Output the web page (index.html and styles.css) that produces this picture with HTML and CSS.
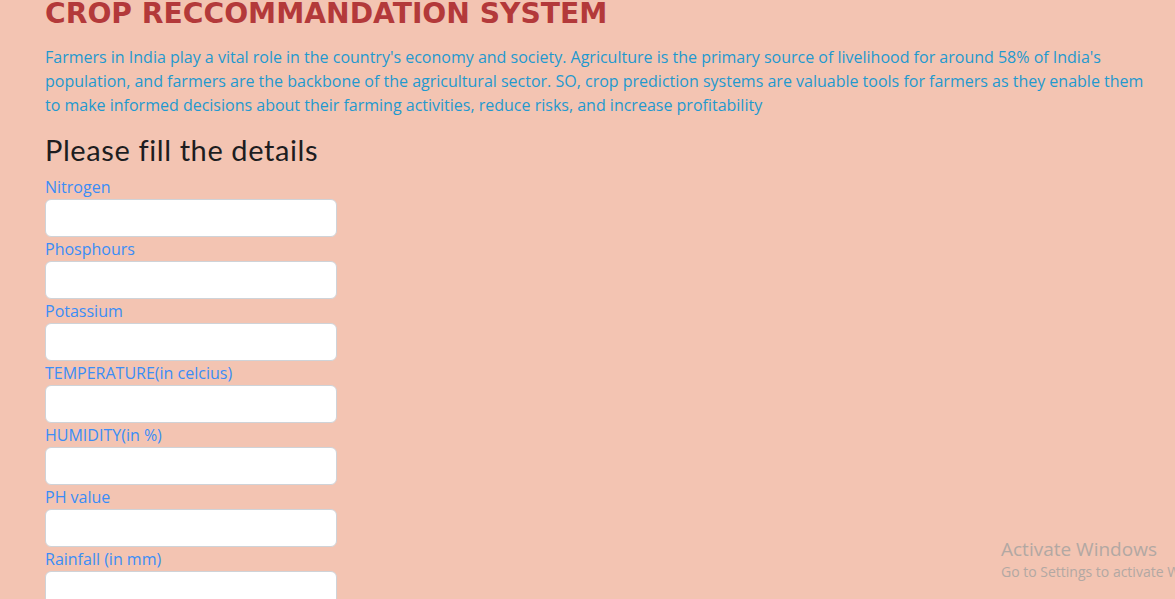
FILE: index.html
```html
<!DOCTYPE html>
<html>
<head>
<meta charset="utf-8">
<link rel="stylesheet" href="styles.css">
</head>
<body>
<div class="page">
  <h1 class="title">CROP RECCOMMANDATION SYSTEM</h1>
  <p class="intro">Farmers in India play a vital role in the country's economy and society. Agriculture is the primary source of livelihood for around 58% of India's population, and farmers are the backbone of the agricultural sector. SO, crop prediction systems are valuable tools for farmers as they enable them to make informed decisions about their farming activities, reduce risks, and increase profitability</p>
  <h3 class="form-title">Please fill the details</h3>
  <form class="form">
    <label class="label">Nitrogen</label>
    <input class="field" type="text">
    <label class="label">Phosphours</label>
    <input class="field" type="text">
    <label class="label">Potassium</label>
    <input class="field" type="text">
    <label class="label">TEMPERATURE(in celcius)</label>
    <input class="field" type="text">
    <label class="label">HUMIDITY(in %)</label>
    <input class="field" type="text">
    <label class="label">PH value</label>
    <input class="field" type="text">
    <label class="label">Rainfall (in mm)</label>
    <input class="field" type="text">
  </form>
</div>
<div class="watermark">
  <div class="wm-title">Activate Windows</div>
  <div class="wm-sub">Go to Settings to activate Windows.</div>
</div>
</body>
</html>
```
FILE: styles.css
```css
html, body {
  margin: 0;
  padding: 0;
  height: 100%;
  overflow: hidden;
}
body {
  background: #f3c4b2;
  font-family: "Open Sans", "Noto Sans", sans-serif;
}
.page {
  padding: 0 30px 0 45px;
  margin-top: -8px;
}
.title {
  margin: 0 0 9px 0;
  font-family: "DejaVu Sans", Verdana, sans-serif;
  font-weight: bold;
  font-size: 28.2px;
  line-height: 44px;
  color: #b3393a;
  letter-spacing: 0;
}
.intro {
  margin: 0 0 16px 0;
  font-size: 16px;
  line-height: 24px;
  color: #1f99cf;
}
.form-title {
  margin: 0 0 8px 0;
  font-family: "Lato", "Open Sans", sans-serif;
  font-weight: 400;
  font-size: 29px;
  line-height: 34px;
  letter-spacing: 0.6px;
  color: #1d1d1f;
}
.form {
  display: flex;
  flex-direction: column;
  align-items: flex-start;
}
.label {
  font-size: 16px;
  line-height: 24px;
  color: #3a8df7;
}
.field {
  box-sizing: border-box;
  width: 292px;
  height: 38px;
  margin: 0;
  background: #fff;
  border: 1px solid #cfd3d8;
  border-radius: 6px;
}
.watermark {
  position: absolute;
  left: 1001px;
  top: 537px;
  white-space: nowrap;
  font-family: "Open Sans", "Noto Sans", sans-serif;
  color: #b2a8a3;
}
.wm-title {
  font-size: 19px;
  line-height: 25px;
}
.wm-sub {
  font-size: 14px;
  line-height: 20px;
}
```
